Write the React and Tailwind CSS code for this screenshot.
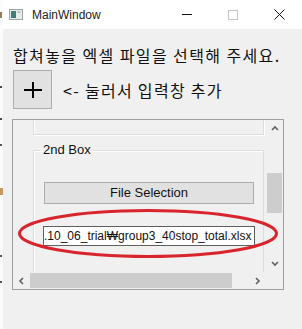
import React from "react";

const Chevron = ({ dir }) => {
  const paths = {
    up: "M1 5 L4 2 L7 5",
    down: "M1 2 L4 5 L7 2",
    left: "M5 1 L2 4 L5 7",
    right: "M2 1 L5 4 L2 7",
  };
  return (
    <svg width="8" height="8" viewBox="0 0 8 8">
      <path d={paths[dir]} fill="none" stroke="#606060" strokeWidth="1.6" />
    </svg>
  );
};

export default function App() {
  return (
    <div className="relative flex h-[329px] w-[302px] overflow-hidden bg-[#f0f0f0]">
      {/* strip of the app behind */}
      <div className="flex w-[3px] flex-col bg-[#fbfbfb]">
        <div className="mt-[12px] h-[6px] w-[2px] bg-[#9a7a50]" />
        <div className="mt-[68px] h-[2px] w-[2px] bg-[#444]" />
        <div className="mt-[30px] h-[2px] w-[2px] bg-[#444]" />
        <div className="mt-[24px] h-[2px] w-[2px] bg-[#555]" />
        <div className="mt-[42px] h-[7px] w-[3px] bg-[#c49a60]" />
        <div className="mt-[60px] h-[2px] w-[2px] bg-[#555]" />
        <div className="mt-[24px] h-[2px] w-[2px] bg-[#555]" />
      </div>

      <div className="flex flex-1 flex-col">
        {/* title bar */}
        <div className="flex h-[29px] items-center bg-white" style={{ fontFamily: '"Liberation Sans", Arial, sans-serif' }}>
          <svg className="ml-[6px]" width="14" height="11" viewBox="0 0 14 11">
            <rect x="0.5" y="0.5" width="13" height="10" fill="#e8ecec" stroke="#9aa4a4" />
            <rect x="2" y="2" width="5" height="7" fill="#3f7f75" />
            <rect x="8.5" y="2" width="3" height="2" fill="#b8c4c4" />
          </svg>
          <span className="ml-[9px] text-[12px] text-[#222]">MainWindow</span>
          <div className="ml-auto flex items-center">
            <div className="flex h-[29px] w-[46px] items-center justify-center">
              <div className="h-[1px] w-[10px] bg-[#111]" />
            </div>
            <div className="flex h-[29px] w-[46px] items-center justify-center">
              <div className="h-[10px] w-[10px] border border-[#c4c4c4]" />
            </div>
            <div className="flex h-[29px] w-[46px] items-center justify-center">
              <svg width="11" height="11" viewBox="0 0 11 11">
                <path d="M0.5 0.5 L10.5 10.5 M10.5 0.5 L0.5 10.5" stroke="#111" strokeWidth="1" />
              </svg>
            </div>
          </div>
        </div>

        {/* content */}
        <div className="flex flex-col pl-[9px]" style={{ fontFamily: '"Noto Sans CJK KR", "Liberation Sans", sans-serif' }}>
          <div className="ml-[1px] mt-[15px] h-[22px] whitespace-nowrap text-[16px] leading-[22px] tracking-[1.4px] text-[#111]">
            합쳐놓을 엑셀 파일을 선택해 주세요.
          </div>
          <div className="ml-[1px] mt-[4px] flex items-center">
            <div className="flex h-[39px] w-[39px] items-center justify-center border border-[#adadad] bg-[#e1e1e1]">
              <svg width="18" height="16" viewBox="0 0 18 16">
                <path d="M0 8 H18 M9 0 V16" stroke="#000" strokeWidth="2" />
              </svg>
            </div>
            <span className="ml-[11px] whitespace-nowrap text-[16px] leading-[22px] tracking-[1.3px] text-[#111]">&lt;- 눌러서 입력창 추가</span>
          </div>

          {/* scroll area */}
          <div className="mt-[10px] grid h-[171px] w-[272px] grid-cols-[253px_17px] grid-rows-[152px_17px] border border-[#a0a0a0]">
            {/* viewport */}
            <div className="flex flex-col overflow-hidden">
              <div className="ml-[20px] h-[15px] w-[231px] shrink-0 border-x border-b border-[#dcdcdc] shadow-[1px_1px_0_#ffffff,inset_1px_0_0_#ffffff]" />
              <fieldset className="ml-[20px] mt-[6px] w-[231px] shrink-0 border border-[#dcdcdc] pb-[26px] shadow-[inset_1px_1px_0_#ffffff]">
                <legend className="ml-[6px] px-[3px] text-[13px] leading-[18px] text-[#111]" style={{ fontFamily: '"Liberation Sans", Arial, sans-serif' }}>
                  2nd Box
                </legend>
                <div className="ml-[10px] mt-[23px] flex h-[22px] w-[210px] items-center justify-center border border-[#adadad] bg-[#e1e1e1] text-[13px] text-[#111]" style={{ fontFamily: '"Liberation Sans", Arial, sans-serif' }}>
                  File Selection
                </div>
                <div className="ml-[9px] mt-[22px] flex h-[20px] w-[212px] items-center overflow-hidden whitespace-nowrap border border-[#5f5f5f] bg-white text-[12px] text-[#111]" style={{ fontFamily: '"Liberation Sans", Arial, sans-serif' }}>
                  <span>.10_06_trial₩group3_40stop_total.xlsx</span>
                </div>
              </fieldset>
            </div>
            {/* vertical scrollbar */}
            <div className="flex flex-col items-center bg-[#f0f0f0]">
              <div className="flex h-[17px] w-full items-center justify-center"><Chevron dir="up" /></div>
              <div className="mt-[36px] h-[40px] w-[15px] bg-[#cdcdcd]" />
              <div className="mt-auto flex h-[17px] w-full items-center justify-center"><Chevron dir="down" /></div>
            </div>
            {/* horizontal scrollbar */}
            <div className="flex items-center bg-[#f0f0f0]">
              <div className="flex h-full w-[17px] items-center justify-center"><Chevron dir="left" /></div>
              <div className="h-[15px] w-[202px] bg-[#cdcdcd]" />
              <div className="ml-auto flex h-full w-[17px] items-center justify-center"><Chevron dir="right" /></div>
            </div>
            <div className="bg-[#f0f0f0]" />
          </div>
        </div>
      </div>

      {/* red annotation ellipse */}
      <svg className="pointer-events-none absolute left-0 top-0" width="302" height="329" viewBox="0 0 302 329">
        <ellipse cx="148" cy="233.5" rx="128.5" ry="23" fill="none" stroke="#d8252d" strokeWidth="3" />
      </svg>
    </div>
  );
}
